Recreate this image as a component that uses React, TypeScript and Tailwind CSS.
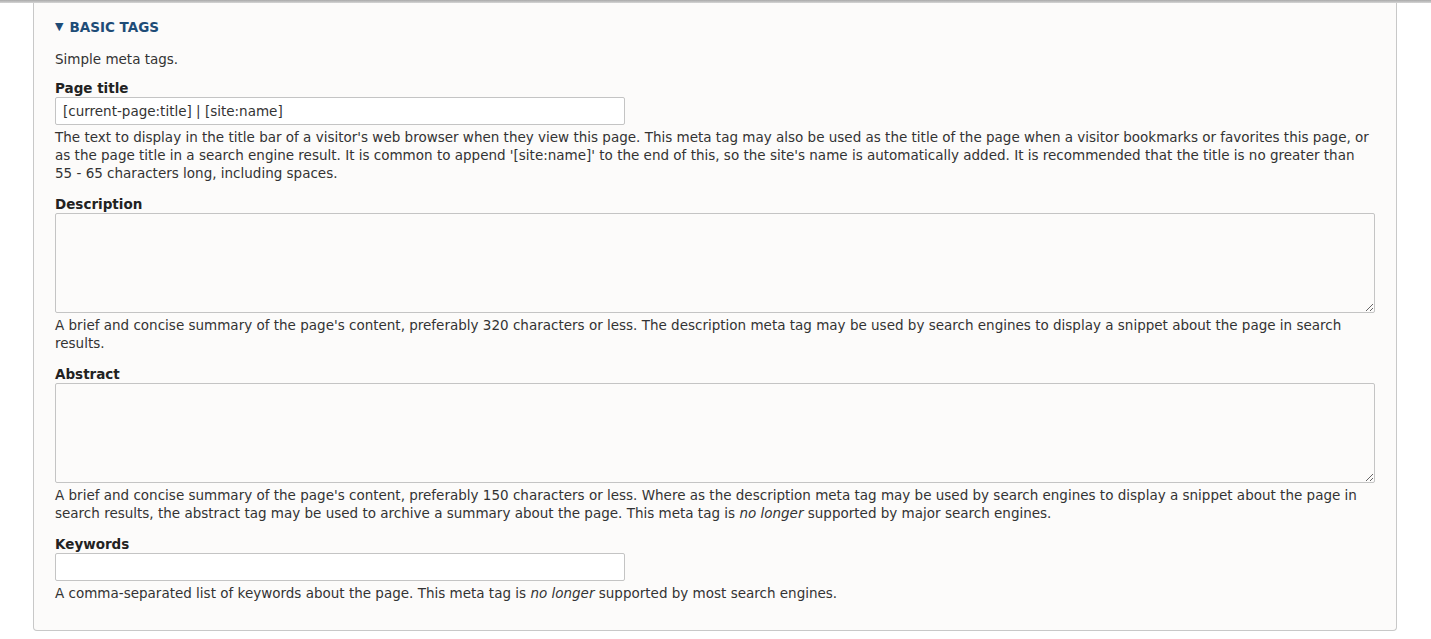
const font = { fontFamily: '"DejaVu Sans", "Open Sans", sans-serif' };

function Field({
  label,
  children,
  help,
  first,
}: {
  label: string;
  children: React.ReactNode;
  help: React.ReactNode;
  first?: boolean;
}) {
  return (
    <div className={first ? "mt-[11px]" : "mt-[13px]"}>
      <label className="block text-[13.5px] font-bold leading-[18px] text-[#222]">{label}</label>
      <div>{children}</div>
      <div className="mt-[3px] text-[13.5px] leading-[18px] text-[#333]">{help}</div>
    </div>
  );
}

export default function App() {
  return (
    <div className="min-h-[639px] w-[1431px] bg-white" style={font}>
      <div className="h-[3px] w-full bg-gradient-to-b from-[#a9a9a9] to-[#d5d5d5]" />
      <div className="ml-[33px] w-[1364px] rounded-b-[4px] border border-t-0 border-[#c8c8c8] bg-[#fcfbfa] pb-[28px] pl-[21px] pr-[21px] pt-[15px]">
        <div className="flex items-center gap-[6px] text-[13.5px] font-bold uppercase leading-[18px] text-[#1e4c77]">
          <span className="text-[11px]">▼</span>
          <span>Basic Tags</span>
        </div>
        <p className="mt-[14px] text-[13.5px] leading-[18px] text-[#333]">Simple meta tags.</p>

        <Field
          first
          label="Page title"
          help="The text to display in the title bar of a visitor's web browser when they view this page. This meta tag may also be used as the title of the page when a visitor bookmarks or favorites this page, or as the page title in a search engine result. It is common to append '[site:name]' to the end of this, so the site's name is automatically added. It is recommended that the title is no greater than 55 - 65 characters long, including spaces."
        >
          <input
            readOnly
            value="[current-page:title] | [site:name]"
            className="block h-[28px] w-[570px] rounded-[2px] border border-[#c4c4c4] bg-white px-[7px] text-[13.5px] text-[#333] outline-none"
            style={font}
          />
        </Field>

        <Field
          label="Description"
          help="A brief and concise summary of the page's content, preferably 320 characters or less. The description meta tag may be used by search engines to display a snippet about the page in search results."
        >
          <textarea
            readOnly
            className="block h-[100px] w-full rounded-[2px] border border-[#c4c4c4] bg-[#fcfbfa] outline-none"
          />
        </Field>

        <Field
          label="Abstract"
          help={
            <>
              A brief and concise summary of the page's content, preferably 150 characters or less. Where as the description meta tag may be used by search engines to display a snippet about the page in search results, the abstract tag may be used to archive a summary about the page. This meta tag is <em>no longer</em> supported by major search engines.
            </>
          }
        >
          <textarea
            readOnly
            className="block h-[100px] w-full rounded-[2px] border border-[#c4c4c4] bg-[#fcfbfa] outline-none"
          />
        </Field>

        <Field
          label="Keywords"
          help={
            <>
              A comma-separated list of keywords about the page. This meta tag is <em>no longer</em> supported by most search engines.
            </>
          }
        >
          <input
            readOnly
            className="block h-[28px] w-[570px] rounded-[2px] border border-[#c4c4c4] bg-white px-[7px] text-[13.5px] outline-none"
          />
        </Field>
      </div>
    </div>
  );
}
